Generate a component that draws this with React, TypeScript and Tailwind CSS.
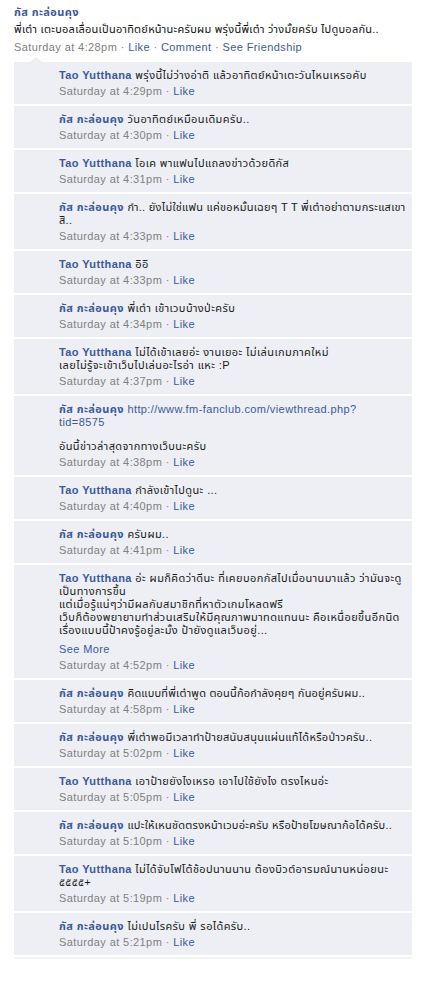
import React from "react";

type C = {
  name: string;
  lines: React.ReactNode[];
  time: string;
  seeMore?: boolean;
  tr?: string;
};

const GUS = "กัส กะล่อนคุง";
const TAO = "Tao Yutthana";

const comments: C[] = [
  { name: TAO, lines: ["พรุ่งนี้ไม่ว่างอ่าติ แล้วอาทิตย์หน้าเตะวันไหนเหรอคับ"], time: "Saturday at 4:29pm" },
  { name: GUS, lines: ["วันอาทิตย์เหมือนเดิมครับ.."], time: "Saturday at 4:30pm" },
  { name: TAO, lines: ["โอเค พาแฟนไปแถลงข่าวด้วยดิกัส"], time: "Saturday at 4:31pm" },
  {
    name: GUS,
    lines: ["กำ.. ยังไม่ใช่แฟน แค่ขอหมั้นเฉยๆ T T พี่เต๋าอย่าตามกระแสเขา", "สิ.."],
    time: "Saturday at 4:33pm",
    tr: "tracking-[0.28px]",
  },
  { name: TAO, lines: ["อิอิ"], time: "Saturday at 4:33pm" },
  { name: GUS, lines: ["พี่เต๋า เข้าเวบบ้างป่ะครับ"], time: "Saturday at 4:34pm" },
  { name: TAO, lines: ["ไม่ได้เข้าเลยอ่ะ งานเยอะ ไม่เล่นเกมภาคใหม่", "เลยไม่รู้จะเข้าเว็บไปเล่นอะไรอ่า แหะ :P"], time: "Saturday at 4:37pm" },
  {
    name: GUS,
    lines: [
      <span className="text-[#3b5998]">http://www.fm-fanclub.com/viewthread.php?</span>,
      <span className="text-[#3b5998]">tid=8575</span>,
      null,
      "อันนี้ข่าวล่าสุดจากทางเว็บนะครับ",
    ],
    time: "Saturday at 4:38pm",
  },
  { name: TAO, lines: ["กำลังเข้าไปดูนะ ..."], time: "Saturday at 4:40pm" },
  { name: GUS, lines: ["ครับผม.."], time: "Saturday at 4:41pm" },
  {
    name: TAO,
    lines: [
      "อ่ะ ผมก็คิดว่าดีนะ ที่เคยบอกกัสไปเมื่อนานมาแล้ว ว่ามันจะดู",
      "เป็นทางการขึ้น",
      "แต่เมื่อรู้แน่ๆว่ามีผลกับสมาชิกที่หาตัวเกมโหลดฟรี",
      "เว็บก็ต้องพยายามทำส่วนเสริมให้มีคุณภาพมาทดแทนนะ คือเหนื่อยขึ้นอีกนิด",
      "เรื่องแบบนี้ป้าคงรู้อยู่ละมั้ง ป้ายังดูแลเว็บอยู่...",
    ],
    time: "Saturday at 4:52pm",
    seeMore: true,
  },
  { name: GUS, lines: ["คิดแบบที่พี่เต๋าพูด ตอนนี้ก้อกำลังคุยๆ กันอยู่ครับผม.."], time: "Saturday at 4:58pm", tr: "tracking-[0.2px]" },
  { name: GUS, lines: ["พี่เต๋าพอมีเวลาทำป้ายสนับสนุนแผ่นแท้ได้หรือป่าวครับ.."], time: "Saturday at 5:02pm", tr: "tracking-[0.3px]" },
  { name: TAO, lines: ["เอาป้ายยังไงเหรอ เอาไปใช้ยังไง ตรงไหนอ่ะ"], time: "Saturday at 5:05pm" },
  { name: GUS, lines: ["แปะให้เหนชัดตรงหน้าเวบอ่ะครับ หรือป้ายโฆษณาก้อได้ครับ.."], time: "Saturday at 5:10pm", tr: "tracking-[0.25px]" },
  { name: TAO, lines: ["ไม่ได้จับโฟโต้ช้อปนานนาน ต้องบิวต์อารมณ์นานหน่อยนะ", "๕๕๕๕+"], time: "Saturday at 5:19pm" },
  { name: GUS, lines: ["ไม่เปนไรครับ พี่ รอได้ครับ.."], time: "Saturday at 5:21pm" },
];

function Comment({ c }: { c: C }) {
  return (
    <div className="bg-[#edeff4] pl-[45px] pr-[6px] pt-[7px] pb-[6px]">
      <div className="leading-[13px] text-[#1a1a1a] whitespace-nowrap">
        {c.lines.map((l, i) =>
          l === null ? (
            <div key={i} className="h-[11px]" />
          ) : (
            <div key={i}>
              {i === 0 && (
                <>
                  <span className="font-bold text-[#3b5998]">{c.name}</span>{" "}
                </>
              )}
              <span className={c.tr}>{l}</span>
            </div>
          )
        )}
      </div>
      {c.seeMore && <div className="mt-[6px] leading-[13px] text-[#3b5998]">See More</div>}
      <div className="mt-[3px] leading-[13px] text-[#808080]">
        {c.time} · <span className="text-[#3b5998]">Like</span>
      </div>
    </div>
  );
}

export default function App() {
  return (
    <div
      className="w-[425px] min-h-[1000px] bg-white text-[11px] tracking-[0.4px]"
      style={{ fontFamily: '"Liberation Sans", "Noto Sans Thai", "Noto Sans", sans-serif' }}
    >
      <div className="pl-[14px] pr-[13px] pt-[5px]">
        <div className="leading-[14px] font-bold text-[#3b5998]">{GUS}</div>
        <div className="mt-[3px] leading-[14px] text-[#111] whitespace-nowrap tracking-[0.25px]">
          พี่เต๋า เตะบอลเลื่อนเป็นอาทิตย์หน้านะครับผม พรุ่งนี้พี่เต๋า ว่างมั้ยครับ ไปดูบอลกัน..
        </div>
        <div className="mt-[4px] leading-[14px] text-[#808080]">
          Saturday at 4:28pm · <span className="text-[#3b5998]">Like</span> ·{" "}
          <span className="text-[#3b5998]">Comment</span> · <span className="text-[#3b5998]">See Friendship</span>
        </div>
        <div className="mt-[3px] pl-[16px] h-[5px] flex items-end">
          <div className="w-0 h-0 border-l-[6px] border-r-[6px] border-b-[5px] border-l-transparent border-r-transparent border-b-[#edeff4]" />
        </div>
        <div className="flex flex-col gap-[2px]">
          {comments.map((c, i) => (
            <Comment key={i} c={c} />
          ))}
        </div>
        <div className="mt-[2px] h-[2px] bg-[#f1f3f7]" />
      </div>
    </div>
  );
}
